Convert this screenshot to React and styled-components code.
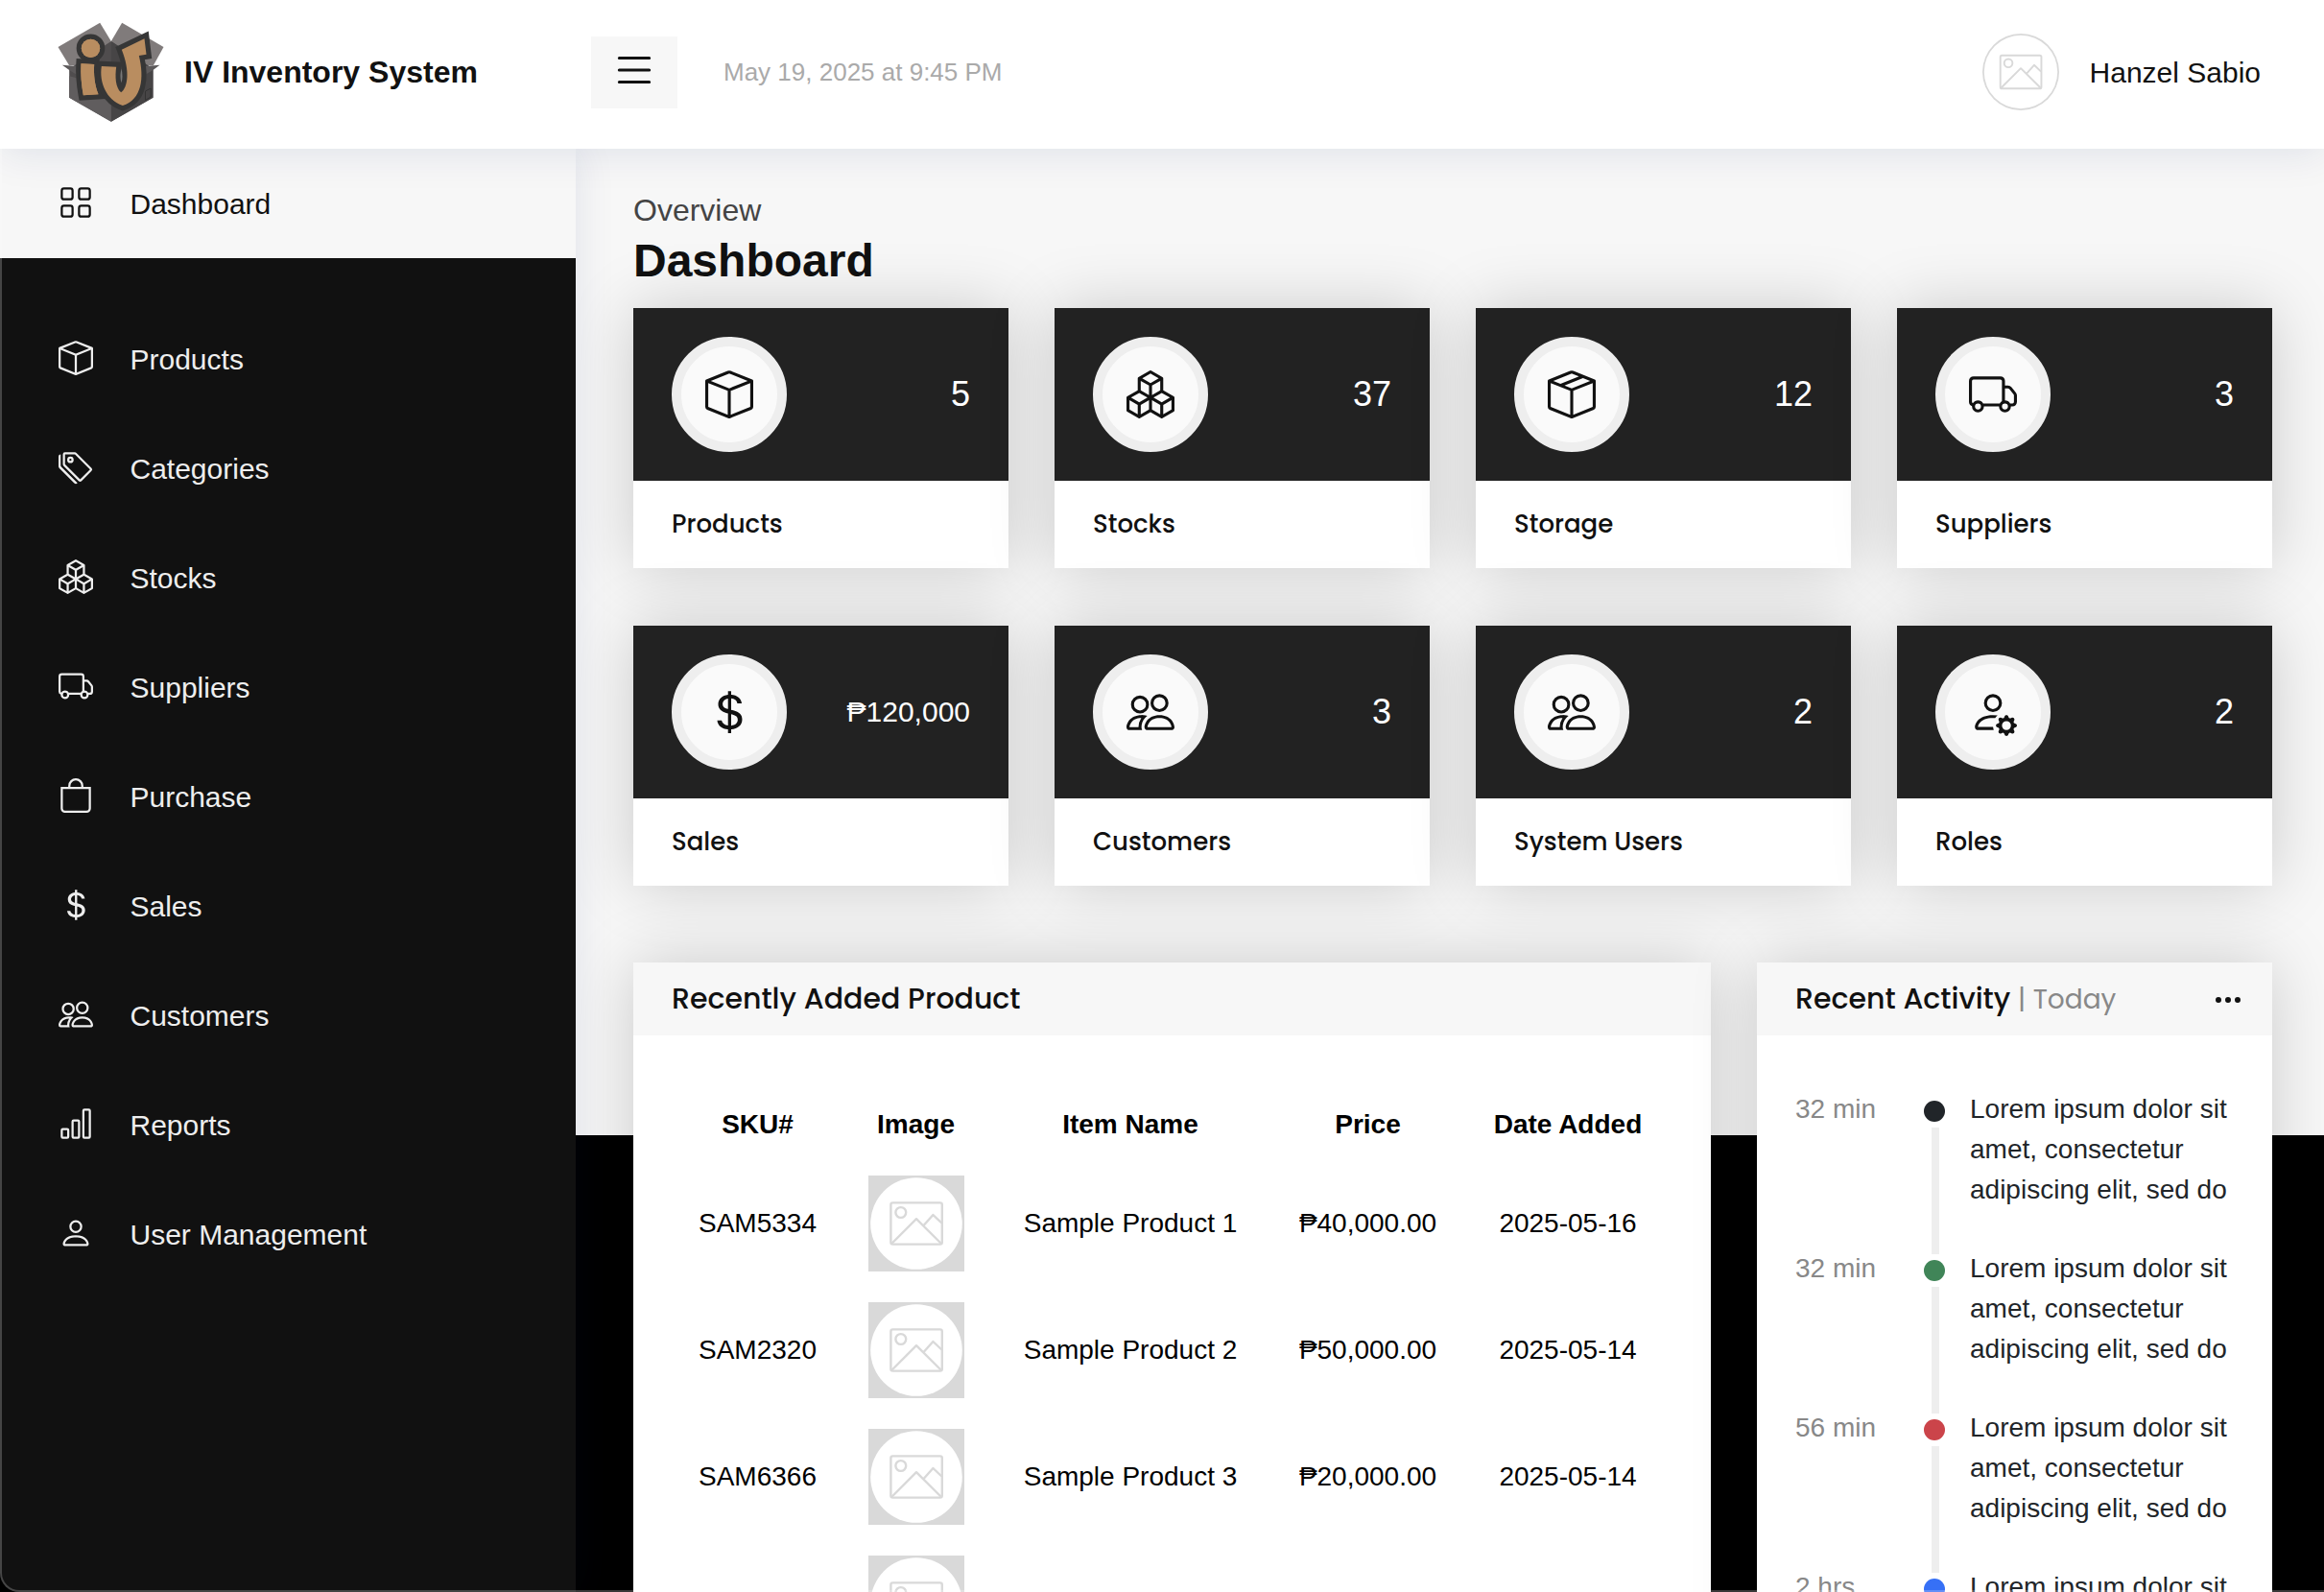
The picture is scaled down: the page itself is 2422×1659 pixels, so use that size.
import React from "react";
import styled, { createGlobalStyle } from "styled-components";
import {
  BsGrid, BsBox, BsBoxSeam, BsTags, BsBoxes, BsTruck, BsBag, BsCurrencyDollar,
  BsPeople, BsBarChart, BsPerson, BsPersonGear, BsList, BsThreeDots,
} from "react-icons/bs";

const GlobalStyle = createGlobalStyle`
  * { box-sizing: border-box; }
  body {
    margin: 0;
    background: #000;
    color: #111;
    font-family: Arial, "Liberation Sans", sans-serif;
    overflow: hidden;
  }
  svg { display: block; }
`;

const display = `Poppins, Inter, sans-serif`;

const Page = styled.div`
  position: relative;
  width: 2422px;
  height: 1659px;
  overflow: hidden;
  display: flex;
  flex-direction: column;
  background: #000;
`;

const WindowEdge = styled.div`
  position: absolute;
  inset: 155px 0 0 0;
  border-left: 2px solid rgba(255, 255, 255, 0.22);
  border-bottom: 2px solid rgba(255, 255, 255, 0.22);
  border-bottom-left-radius: 20px;
  box-shadow: -12px 12px 0 0 #000;
  pointer-events: none;
  z-index: 5;
`;

const Header = styled.header`
  position: relative;
  z-index: 3;
  flex: none;
  height: 155px;
  padding: 0 66px 5px 60px;
  display: flex;
  align-items: center;
  background: #fff;
  box-shadow: 0 4px 40px rgba(1, 41, 112, 0.1);
`;

const Brand = styled.div`
  width: 556px;
  display: flex;
  align-items: center;
  gap: 21px;
  font-size: 32px;
  font-weight: 700;
  svg { margin-top: -1px; }
`;

const MenuButton = styled.button`
  width: 90px;
  height: 75px;
  margin: 1px 0 0;
  padding: 0 0 5px;
  border: 0;
  display: flex;
  align-items: center;
  justify-content: center;
  background: #f7f7f7;
  color: #111;
`;

const DateText = styled.time`
  margin-left: 48px;
  font-size: 26px;
  color: #aaa;
`;

const Profile = styled.div`
  margin-left: auto;
  display: flex;
  align-items: center;
  gap: 32px;
  font-size: 30px;
`;

const ProfileName = styled.span`
  padding-top: 2px;
`;

const Avatar = styled.div`
  width: 80px;
  height: 80px;
  border-radius: 50%;
  overflow: hidden;
`;

const Body = styled.div`
  flex: 1;
  display: flex;
  align-items: flex-start;
`;

const Sidebar = styled.nav`
  position: relative;
  z-index: 2;
  flex: none;
  width: 600px;
  height: 1504px;
  background: #111;
  box-shadow: 0 0 40px rgba(1, 41, 112, 0.1);
`;

const NavItem = styled.a`
  height: 114px;
  padding: 2px 0 0 60px;
  margin-bottom: ${(p) => (p.$active ? 48 : 0)}px;
  display: flex;
  align-items: center;
  gap: 39px;
  font-size: 30px;
  color: ${(p) => (p.$active ? "#111" : "#eee")};
  background: ${(p) => (p.$active ? "#f7f7f7" : "transparent")};
  svg { margin: -4px 0 0 0.5px; }
`;

const Main = styled.main`
  flex: 1;
  height: 1028px;
  padding: 43px 54px 0 60px;
  background: #f7f7f7;
`;

const Overline = styled.p`
  margin: 0;
  font-size: 32px;
  line-height: 42px;
  color: #444;
`;

const Title = styled.h1`
  margin: 3px 0 0;
  font-size: 48px;
  line-height: 58px;
  font-weight: 700;
`;

const StatGrid = styled.section`
  margin-top: 20px;
  display: grid;
  grid-template-columns: repeat(4, 1fr);
  gap: 60px 48px;
`;

const Card = styled.article`
  position: relative;
  background: #fff;
  box-shadow: 0 0 64px rgba(0, 0, 0, 0.18);
`;

const StatTop = styled.div`
  height: 180px;
  padding: 0 40px;
  display: flex;
  align-items: center;
  justify-content: space-between;
  background: #222;
  color: #fff;
  font-size: ${(p) => (p.$long ? 30 : 36)}px;
`;

const Disc = styled.div`
  width: 120px;
  height: 120px;
  border: 10px solid #eee;
  border-radius: 50%;
  display: flex;
  align-items: center;
  justify-content: center;
  background: #fafafa;
  color: #111;
`;

const StatLabel = styled.div`
  height: 91px;
  padding: 0 40px;
  display: flex;
  align-items: center;
  font-family: ${display};
  font-size: 26px;
  font-weight: 500;
`;

const Panels = styled.section`
  margin-top: 80px;
  display: grid;
  grid-template-columns: 1123px 537px;
  gap: 48px;
`;

const Panel = styled(Card)`
  height: 760px;
`;

const PanelHead = styled.header`
  height: 76px;
  padding: 0 30px 0 40px;
  display: flex;
  align-items: center;
  justify-content: space-between;
  background: #f7f7f7;
  svg { margin-top: 1px; }
`;

const PanelTitle = styled.h2`
  margin: 0;
  font-family: ${display};
  font-size: 30px;
  font-weight: 500;
  white-space: pre;
`;

const Muted = styled.span`
  font-size: 28px;
  font-weight: 400;
  color: #888;
`;

const Table = styled.table`
  width: 1043px;
  margin: 54px 40px 0;
  table-layout: fixed;
  border-collapse: collapse;
  font-size: 28px;
  color: #000;
  text-align: center;
`;

const HeadCell = styled.th`
  width: ${(p) => p.$w}px;
  height: 76px;
  padding: 2px 0 0;
`;

const Cell = styled.td`
  height: 132px;
  padding: 0;
`;

const Thumb = styled.div`
  width: 100px;
  height: 100px;
  margin: 0 auto;
`;

const Feed = styled.div`
  padding: 55px 0 0 40px;
`;

const Entry = styled.div`
  display: grid;
  grid-template-columns: 134px 22px 1fr;
  height: 166px;
  font-size: 28px;
  line-height: 42px;
`;

const When = styled.span`
  padding-top: 1px;
  color: #888;
`;

const Rail = styled.div`
  display: flex;
  flex-direction: column;
  margin: 13px 0 -7px;
`;

const Dot = styled.i`
  width: 22px;
  height: 22px;
  border-radius: 50%;
  background: ${(p) => p.$color};
`;

const Line = styled.i`
  flex: 1;
  width: 8px;
  margin: 6px 0 0 8px;
  background: #eee;
`;

const Note = styled.p`
  margin: 1px 0 0 26px;
  width: 290px;
  color: #212529;
`;

function Logo() {
  return (
    <svg width="111" height="104" viewBox="61 36 332 312">
      <path d="M62 114 193 38 228 96 180 172 97 172Z" fill="#807b7b" />
      <path d="M392 114 262 38 228 96 280 172 360 172Z" fill="#807b7b" />
      <path d="M97 182 228 96 359 182 359 272 228 347 97 272Z" fill="#504d4e" />
      <path d="M228 96 359 182 359 272 228 347Z" fill="#474546" />
      <path d="M97 205 228 240 228 347 97 272Z" fill="#605d5e" />
      <path d="M75 170 120 174 120 200 97 186Z" fill="#5c595a" />
      <path d="M380 170 335 174 335 200 359 186Z" fill="#5c595a" />
      <path d="M335 252 352 243 352 270 335 280Z" fill="none" stroke="#333" strokeWidth="3" />
      <g fill="#b98d60" stroke="#363636" strokeWidth="31" strokeLinejoin="miter" paintOrder="stroke">
        <circle cx="164" cy="118" r="29" />
        <path d="M134 166 175 168C173 200 176 232 188 262L141 265C135 232 132 200 134 166Z" />
        <path d="M198 174 244 176C240 205 241 240 259 256C280 240 288 190 261 122L332 88 338 137 315 141C332 212 324 278 264 297C213 280 190 224 198 174Z" />
      </g>
      <path d="M134 166 175 168C173 200 176 232 188 262L141 265C135 232 132 200 134 166Z" fill="#b98d60" />
      <circle cx="164" cy="118" r="29" fill="#b98d60" />
      <path d="M260 182C264 198 264 212 260 226C256 212 256 198 260 182Z" fill="#777" />
    </svg>
  );
}

function Placeholder() {
  return (
    <svg width="100%" height="100%" viewBox="0 0 100 100">
      <rect width="100" height="100" fill="#d9d9d9" />
      <circle cx="50" cy="50" r="47.8" fill="#fff" />
      <g fill="none" stroke="#d9d9d9" strokeWidth="2.4" strokeLinejoin="round">
        <rect x="23.4" y="28.4" width="53.4" height="43.2" rx="2" />
        <circle cx="33.8" cy="38.5" r="5.4" />
        <path d="M24.2 71 50 45.2 76 71M57.6 52 67.4 41 76.4 49.5" />
      </g>
    </svg>
  );
}

const nav = [
  ["Dashboard", BsGrid], ["Products", BsBox], ["Categories", BsTags], ["Stocks", BsBoxes],
  ["Suppliers", BsTruck], ["Purchase", BsBag], ["Sales", BsCurrencyDollar],
  ["Customers", BsPeople], ["Reports", BsBarChart], ["User Management", BsPerson],
];

const stats = [
  ["Products", "5", BsBox], ["Stocks", "37", BsBoxes], ["Storage", "12", BsBoxSeam],
  ["Suppliers", "3", BsTruck], ["Sales", "₱120,000", BsCurrencyDollar],
  ["Customers", "3", BsPeople], ["System Users", "2", BsPeople], ["Roles", "2", BsPersonGear],
];

const columns = [["SKU#", 179], ["Image", 151], ["Item Name", 296], ["Price", 199], ["Date Added", 218]];

const products = [
  ["SAM5334", "Sample Product 1", "₱40,000.00", "2025-05-16"],
  ["SAM2320", "Sample Product 2", "₱50,000.00", "2025-05-14"],
  ["SAM6366", "Sample Product 3", "₱20,000.00", "2025-05-14"],
  [],
];

const activity = [
  ["32 min", "#212529"], ["32 min", "#408558"], ["56 min", "#cb444a"], ["2 hrs", "#3670f6"],
];

export default function App() {
  return (
    <Page>
      <GlobalStyle />
      <Header>
        <Brand><Logo />IV Inventory System</Brand>
        <MenuButton><BsList size={50} /></MenuButton>
        <DateText>May 19, 2025 at 9:45 PM</DateText>
        <Profile>
          <Avatar><Placeholder /></Avatar>
          <ProfileName>Hanzel Sabio</ProfileName>
        </Profile>
      </Header>
      <Body>
        <Sidebar>
          {nav.map(([label, Icon], i) => (
            <NavItem key={label} $active={i === 0}><Icon size={36} />{label}</NavItem>
          ))}
        </Sidebar>
        <Main>
          <Overline>Overview</Overline>
          <Title>Dashboard</Title>
          <StatGrid>
            {stats.map(([label, value, Icon]) => (
              <Card key={label}>
                <StatTop $long={value.length > 3}>
                  <Disc><Icon size={50} /></Disc>{value}
                </StatTop>
                <StatLabel>{label}</StatLabel>
              </Card>
            ))}
          </StatGrid>
          <Panels>
            <Panel>
              <PanelHead><PanelTitle>Recently Added Product</PanelTitle></PanelHead>
              <Table>
                <thead>
                  <tr>{columns.map(([name, w]) => <HeadCell key={name} $w={w}>{name}</HeadCell>)}</tr>
                </thead>
                <tbody>
                  {products.map(([sku, name, price, date], i) => (
                    <tr key={i}>
                      <Cell>{sku}</Cell>
                      <Cell><Thumb><Placeholder /></Thumb></Cell>
                      <Cell>{name}</Cell>
                      <Cell>{price}</Cell>
                      <Cell>{date}</Cell>
                    </tr>
                  ))}
                </tbody>
              </Table>
            </Panel>
            <Panel>
              <PanelHead>
                <PanelTitle>Recent Activity <Muted>| Today</Muted></PanelTitle>
                <BsThreeDots size={32} />
              </PanelHead>
              <Feed>
                {activity.map(([when, color], i) => (
                  <Entry key={i}>
                    <When>{when}</When>
                    <Rail><Dot $color={color} /><Line /></Rail>
                    <Note>Lorem ipsum dolor sit{i < 3 && " amet, consectetur adipiscing elit, sed do"}</Note>
                  </Entry>
                ))}
              </Feed>
            </Panel>
          </Panels>
        </Main>
      </Body>
      <WindowEdge />
    </Page>
  );
}
